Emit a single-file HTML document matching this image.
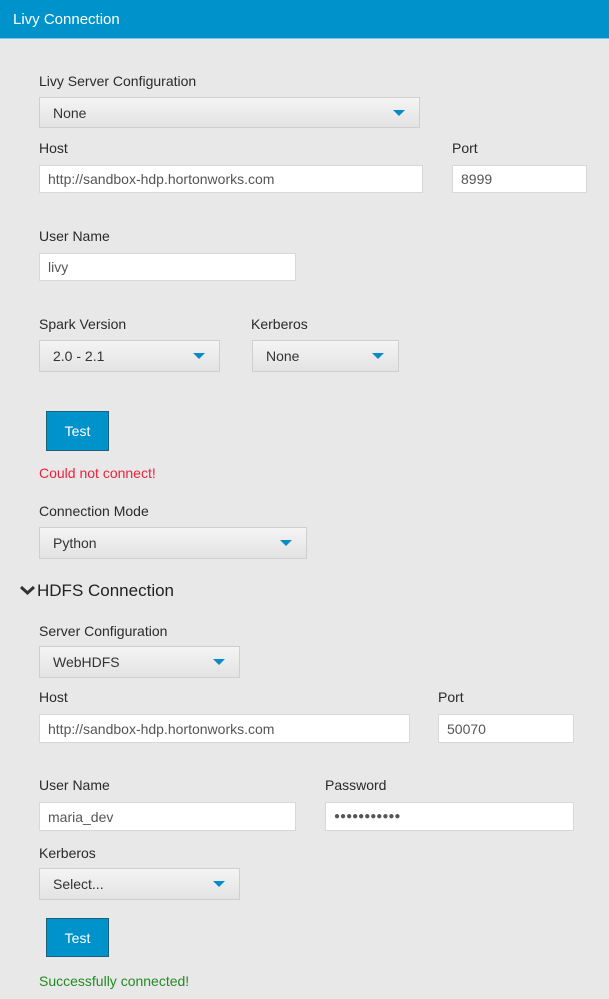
<!DOCTYPE html>
<html><head><meta charset="utf-8"><style>
*{margin:0;padding:0;box-sizing:border-box}
body{width:609px;height:999px;background:#e8e8e8;font-family:"Liberation Sans",sans-serif;position:relative;overflow:hidden;color:#333}
.hdr{position:absolute;left:0;top:0;width:609px;height:39px;background:#0093cb;color:#fff;font-size:15px;line-height:39px;padding-left:13px;border-bottom:1px solid #7fc6e3}
.l{position:absolute;font-size:14px;color:#2a2a2a;line-height:16px}
.in{position:absolute;background:#fff;border:1px solid #d8d8d8;font-size:14px;color:#555;padding-left:8px;display:flex;align-items:center}
.sel{position:absolute;background:linear-gradient(#f4f4f4,#e3e3e3);border:1px solid #cfcfcf;font-size:14px;color:#333;padding-left:13px;display:flex;align-items:center}
.sel:after{content:"";position:absolute;right:14px;top:50%;margin-top:-3px;border-left:6px solid transparent;border-right:6px solid transparent;border-top:6px solid #0a8ac8}
.btn{position:absolute;background:#0093cb;border:1px solid #1d5f7a;color:#fff;font-size:14px;display:flex;align-items:center;justify-content:center}
</style></head><body>
<div class="hdr">Livy Connection</div>
<div class="l" style="left:39px;top:73px">Livy Server Configuration</div>
<div class="sel" style="left:39px;top:97px;width:381px;height:31px">None</div>
<div class="l" style="left:39px;top:140px">Host</div>
<div class="l" style="left:452px;top:140px">Port</div>
<div class="in" style="left:39px;top:165px;width:384px;height:28px">http://sandbox-hdp.hortonworks.com</div>
<div class="in" style="left:452px;top:165px;width:135px;height:28px">8999</div>
<div class="l" style="left:39px;top:228px">User Name</div>
<div class="in" style="left:39px;top:253px;width:257px;height:28px">livy</div>
<div class="l" style="left:39px;top:316px">Spark Version</div>
<div class="l" style="left:251px;top:316px">Kerberos</div>
<div class="sel" style="left:39px;top:340px;width:181px;height:32px">2.0 - 2.1</div>
<div class="sel" style="left:252px;top:340px;width:147px;height:32px">None</div>
<div class="btn" style="left:46px;top:411px;width:63px;height:40px">Test</div>
<div class="l" style="left:39px;top:465px;color:#f0203a">Could not connect!</div>
<div class="l" style="left:39px;top:503px">Connection Mode</div>
<div class="sel" style="left:39px;top:527px;width:268px;height:32px">Python</div>
<svg style="position:absolute;left:19px;top:584px" width="17" height="12" viewBox="0 0 17 12"><path d="M2 3 L8.5 9 L15 3" fill="none" stroke="#333" stroke-width="3"/></svg>
<div class="l" style="left:37px;top:581px;font-size:17px;line-height:20px;color:#222">HDFS Connection</div>
<div class="l" style="left:39px;top:623px">Server Configuration</div>
<div class="sel" style="left:39px;top:646px;width:201px;height:32px">WebHDFS</div>
<div class="l" style="left:39px;top:689px">Host</div>
<div class="l" style="left:438px;top:689px">Port</div>
<div class="in" style="left:39px;top:714px;width:371px;height:29px">http://sandbox-hdp.hortonworks.com</div>
<div class="in" style="left:438px;top:714px;width:136px;height:29px">50070</div>
<div class="l" style="left:39px;top:777px">User Name</div>
<div class="l" style="left:325px;top:777px">Password</div>
<div class="in" style="left:39px;top:802px;width:257px;height:29px">maria_dev</div>
<div class="in" style="left:325px;top:802px;width:249px;height:29px;font-size:10px;letter-spacing:0px">●●●●●●●●●●●</div>
<div class="l" style="left:39px;top:845px">Kerberos</div>
<div class="sel" style="left:39px;top:868px;width:201px;height:32px">Select...</div>
<div class="btn" style="left:46px;top:918px;width:63px;height:39px">Test</div>
<div class="l" style="left:39px;top:973px;color:#238a23">Successfully connected!</div>
</body></html>
